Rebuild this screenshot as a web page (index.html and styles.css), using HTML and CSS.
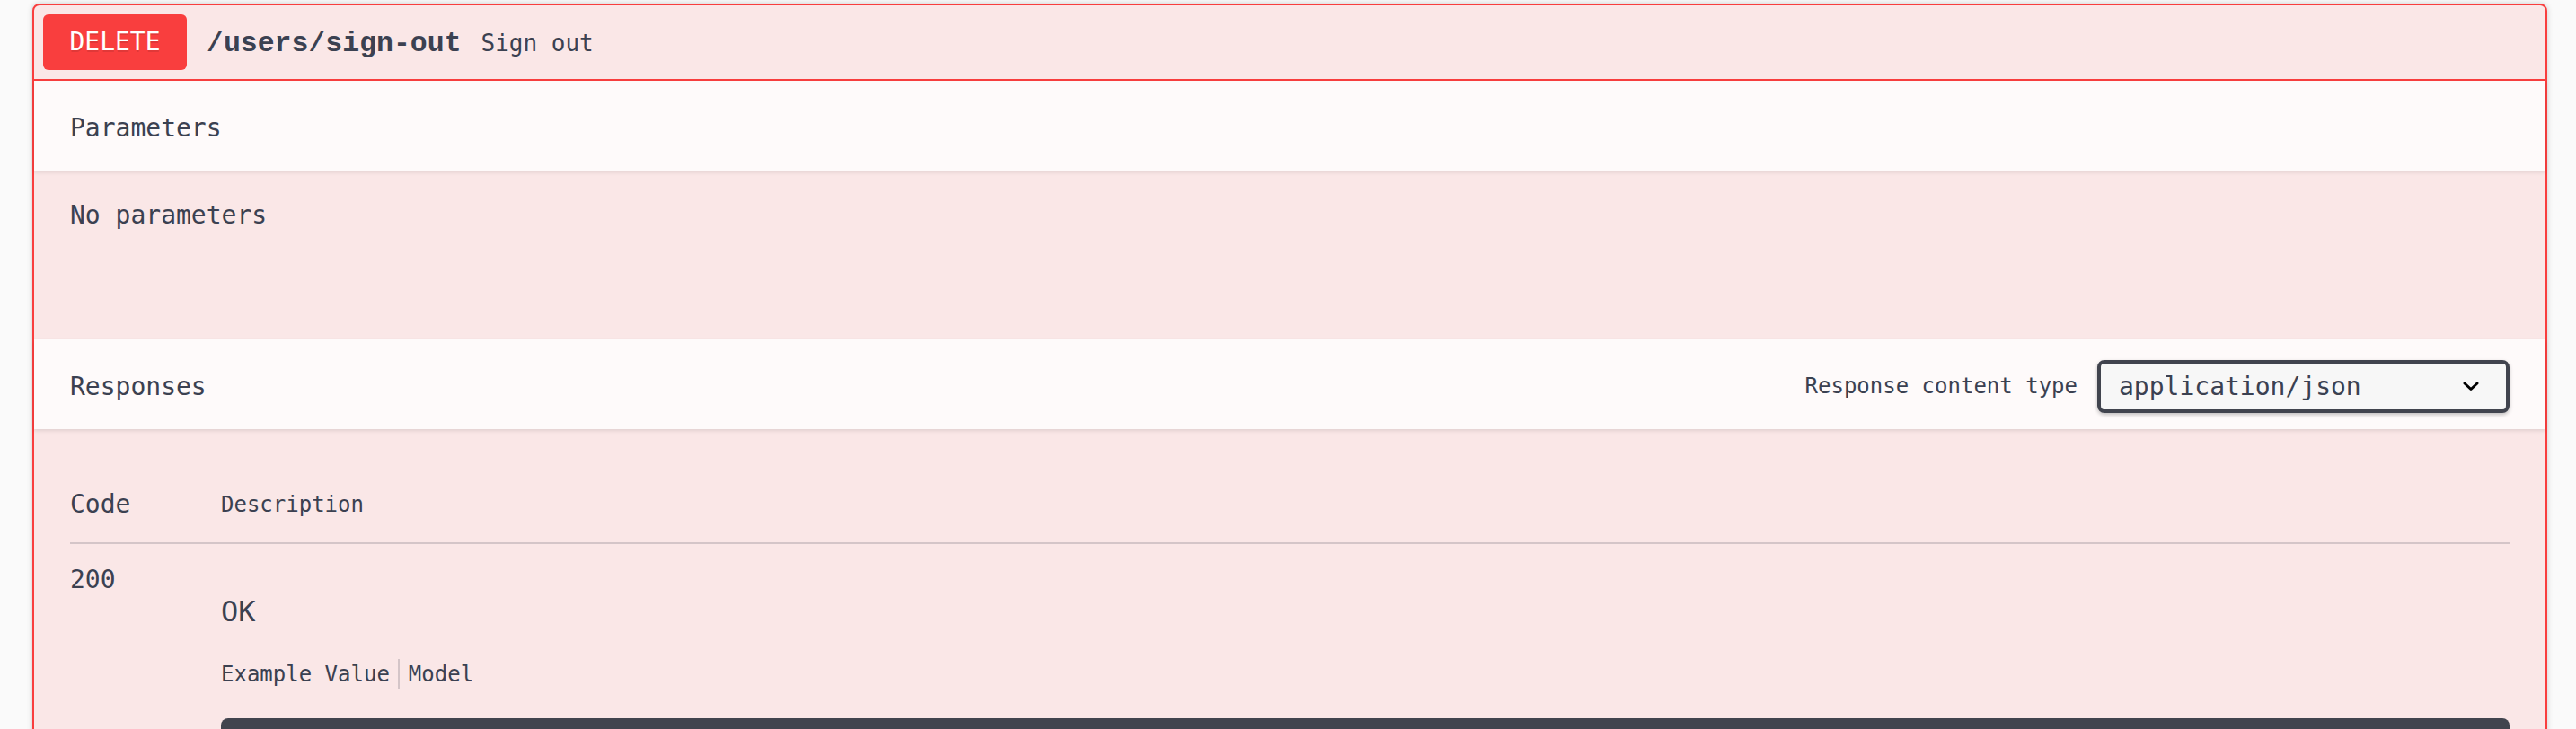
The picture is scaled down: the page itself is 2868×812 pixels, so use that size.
FILE: index.html
```html
<!DOCTYPE html>
<html lang="en">
<head>
<meta charset="utf-8">
<title>DELETE /users/sign-out</title>
<link rel="stylesheet" href="styles.css">
</head>
<body>
<div class="page">
  <div class="opblock">
    <div class="summary">
      <span class="method">DELETE</span>
      <span class="path">/users/sign-out</span>
      <span class="summary-desc">Sign out</span>
    </div>

    <div class="section-header">
      <h4 class="section-title">Parameters</h4>
    </div>
    <div class="params-body">No parameters</div>

    <div class="section-header responses-header">
      <h4 class="section-title">Responses</h4>
      <div class="ctype">
        <span class="ctype-label">Response content type</span>
        <div class="select">
          <span class="select-value">application/json</span>
          <svg class="chevron" width="18" height="11" viewBox="0 0 18 11" aria-hidden="true">
            <path d="M2 2 L9 8.5 L16 2" fill="none" stroke="#000" stroke-width="3" stroke-linecap="round" stroke-linejoin="round"/>
          </svg>
        </div>
      </div>
    </div>

    <div class="responses-inner">
      <div class="resp-head">
        <div class="col-code head-code">Code</div>
        <div class="col-desc head-desc">Description</div>
      </div>
      <div class="resp-row">
        <div class="col-code code-val">200</div>
        <div class="col-desc">
          <div class="ok">OK</div>
          <div class="tabs">
            <span class="tab">Example Value</span>
            <span class="tab-sep"></span>
            <span class="tab">Model</span>
          </div>
          <div class="example"></div>
        </div>
      </div>
    </div>
  </div>
</div>
</body>
</html>
```
FILE: styles.css
```css
html, body {
  margin: 0;
  padding: 0;
  overflow: hidden;
  background: #fafafa;
}

body {
  font-family: "DejaVu Sans Mono", "Liberation Mono", monospace;
  color: #3b4151;
}

.page {
  padding: 4px 32px 0 36px;
}

.opblock {
  border: 2px solid #f93e3e;
  border-radius: 8px;
  background: #fae7e7;
  box-shadow: 0 0 6px rgba(0, 0, 0, 0.19);
}

.summary {
  display: flex;
  align-items: center;
  padding: 10px;
  border-bottom: 2px solid #f93e3e;
}

.method {
  flex: none;
  width: 160px;
  height: 62px;
  line-height: 62px;
  text-align: center;
  border-radius: 6px;
  background: #f93e3e;
  color: #fff;
  font-family: "DejaVu Sans Mono", monospace;
  font-size: 28px;
  text-shadow: 0 2px 0 rgba(0, 0, 0, 0.1);
}

.path {
  padding: 2px 22px 0 22px;
  font-family: "Liberation Mono", "Courier New", monospace;
  font-weight: 700;
  font-size: 31.5px;
  color: #3b4151;
}

.summary-desc {
  padding-top: 2px;
  font-size: 26px;
  color: #3b4151;
}

.section-header {
  display: flex;
  align-items: center;
  box-sizing: border-box;
  height: 100px;
  padding: 18px 40px 14px;
  background: rgba(255, 255, 255, 0.8);
  box-shadow: 0 2px 4px rgba(0, 0, 0, 0.1);
  position: relative;
}

.section-title {
  flex: 1;
  margin: 0;
  font-size: 28px;
  font-weight: 400;
}

.params-body {
  box-sizing: border-box;
  height: 188px;
  padding: 33px 40px;
  font-size: 28px;
  line-height: 34px;
}

.ctype {
  display: flex;
  align-items: center;
}

.ctype-label {
  font-size: 24px;
  margin-right: 22px;
}

.select {
  box-sizing: border-box;
  width: 459px;
  height: 59px;
  display: flex;
  align-items: center;
  justify-content: space-between;
  padding: 0 30px 0 20px;
  border: 4px solid #41444e;
  border-radius: 8px;
  background: #f7f7f7;
  box-shadow: 0 2px 4px rgba(0, 0, 0, 0.25);
  font-size: 28px;
  color: #3b4151;
}

.chevron {
  display: block;
}

.responses-inner {
  padding: 40px 40px;
}

.resp-head {
  display: flex;
  align-items: center;
  padding: 25px 0 23px;
  border-bottom: 2px solid rgba(59, 65, 81, 0.2);
  line-height: 38px;
}

.col-code {
  flex: none;
  width: 168px;
}

.col-desc {
  flex: 1;
  min-width: 0;
}

.head-code {
  font-size: 28px;
}

.head-desc {
  font-size: 24px;
}

.resp-row {
  display: flex;
  align-items: flex-start;
  padding-top: 20px;
}

.code-val {
  font-size: 28px;
  line-height: 40px;
}

.ok {
  margin-top: 35px;
  font-size: 32px;
  line-height: 40px;
}

.tabs {
  display: flex;
  align-items: stretch;
  margin-top: 33px;
  height: 34px;
  font-size: 24px;
  line-height: 34px;
}

.tab-sep {
  width: 2px;
  margin: 0 10px 0 9px;
  background: rgba(59, 65, 81, 0.2);
}

.example {
  margin-top: 32px;
  height: 300px;
  border-radius: 8px;
  background: #41444e;
}
```
